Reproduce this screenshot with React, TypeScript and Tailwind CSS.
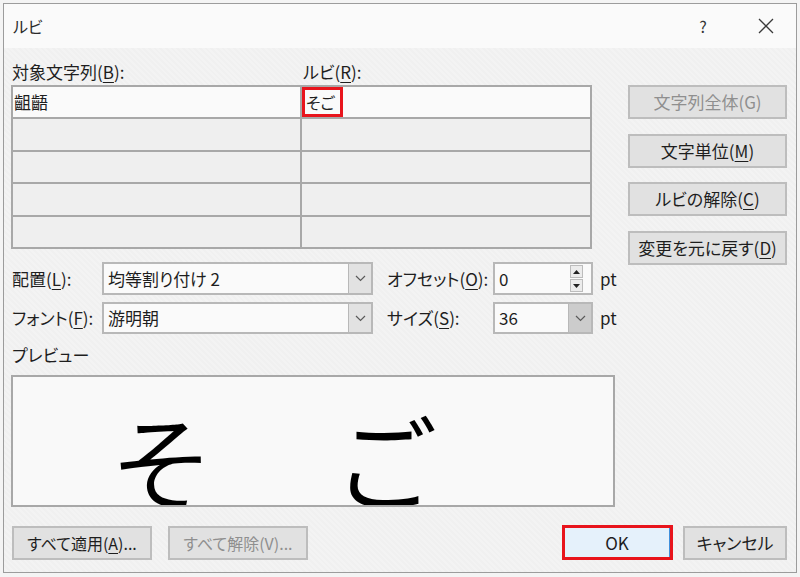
import React from "react";

const font = "font-['Noto_Sans_CJK_JP','Noto_Sans',sans-serif] [font-feature-settings:'palt']";

function U({ children }: { children: React.ReactNode }) {
  return <span className="underline underline-offset-[3px] decoration-1">{children}</span>;
}

function Chevron() {
  return (
    <svg width="11" height="7" viewBox="0 0 11 7" fill="none">
      <polyline points="1,1 5.5,5.5 10,1" stroke="#5a5a5a" strokeWidth="1.2" />
    </svg>
  );
}

function Btn({
  children,
  disabled,
  className = "",
}: {
  children: React.ReactNode;
  disabled?: boolean;
  className?: string;
}) {
  return (
    <div
      className={`h-[34px] shrink-0 flex items-center justify-center bg-[#e1e1e1] border-2 border-[#bdbdbd] ${
        disabled ? "text-[#8f8f8f]" : "text-[#1e1e1e]"
      } ${className}`}
    >
      {children}
    </div>
  );
}

function Combo({
  text,
  width,
  dark,
}: {
  text: string;
  width: string;
  dark?: boolean;
}) {
  return (
    <div className={`${width} h-full flex bg-[#fafafa] border-2 border-[#b8b8b8]`}>
      <div className="flex-1 flex items-center pl-[4px] text-[#1e1e1e]">{text}</div>
      <div
        className={`w-[23px] flex items-center justify-center border-l border-[#b8b8b8] ${
          dark ? "bg-[#cccccc]" : "bg-[#e2e2e2]"
        }`}
      >
        <Chevron />
      </div>
    </div>
  );
}

export default function App() {
  const cells = [0, 1, 2, 3, 4];
  return (
    <div className={`w-[800px] h-[577px] bg-[#f4f4f4] overflow-hidden ${font}`}>
      <div className="ml-[3px] mt-[3px] w-[794px] h-[570px] border border-[#9c9c9c] bg-[#f0f0f0] flex flex-col">
        {/* title bar */}
        <div className="h-[44px] bg-[#fafafa] flex items-center shrink-0">
          <div className="pl-[9px] text-[16px] text-[#2a2a2a]">ルビ</div>
          <div className="ml-auto w-[22px] text-center text-[16px] text-[#333] mr-[43px]">?</div>
          <div className="w-[18px] h-[18px] mr-[21px] flex items-center justify-center">
            <svg width="16" height="16" viewBox="0 0 16 16">
              <path d="M1 1 L15 15 M15 1 L1 15" stroke="#3a3a3a" strokeWidth="1.3" />
            </svg>
          </div>
        </div>

        {/* body */}
        <div className="flex-1 pl-[7px] pt-[10px] bg-[repeating-linear-gradient(45deg,#f0f0f0_0px,#f0f0f0_2px,#f3f3f3_2px,#f3f3f3_4px)] text-[#1e1e1e] text-[17px] leading-[22px]">
          <div className="flex items-start h-[191px]">
            <div className="w-[581px]">
              <div className="h-[27px] flex items-center">
                <div className="w-[292px] pl-[1px]">
                  対象文字列(<U>B</U>):
                </div>
                <div>
                  ルビ(<U>R</U>):
                </div>
              </div>
              <div className="h-[164px] border-2 border-[#a8a8a8] flex flex-col">
                {cells.map((i) => (
                  <div
                    key={i}
                    className={`flex-1 flex ${i > 0 ? "border-t-2 border-[#a8a8a8]" : ""} ${
                      i === 0 ? "bg-[#fafafa]" : "bg-[#efefef]"
                    }`}
                  >
                    <div className="w-[289px] border-r-2 border-[#a8a8a8] flex items-center pl-[1px]">
                      {i === 0 ? "齟齬" : ""}
                    </div>
                    <div className="flex-1 flex items-center">
                      {i === 0 ? (
                        <div className="h-full w-[41px] border-[3px] border-[#e8141c] flex items-center pl-[1px] text-[16px]">
                          そご
                        </div>
                      ) : null}
                    </div>
                  </div>
                ))}
              </div>
            </div>
            <div className="ml-[36px] mt-[27px] w-[159px] flex flex-col gap-[14.5px]">
              <Btn disabled>文字列全体(G)</Btn>
              <Btn>
                文字単位(<U>M</U>)
              </Btn>
              <Btn>
                ルビの解除(<U>C</U>)
              </Btn>
              <Btn>
                変更を元に戻す(<U>D</U>)
              </Btn>
            </div>
          </div>

          {/* combo rows */}
          <div className="mt-[13px] h-[33px] flex items-center">
            <div className="w-[91px] pl-[1px]">
              配置(<U>L</U>):
            </div>
            <Combo text="均等割り付け 2" width="w-[271px]" />
            <div className="w-[106px] ml-[14px]">
              オフセット(<U>O</U>):
            </div>
            <div className="w-[100px] h-full flex bg-[#fafafa] border-2 border-[#b8b8b8]">
              <div className="flex-1 flex items-center pl-[4px]">0</div>
              <div className="w-[13px] mr-[8px] flex flex-col justify-center gap-[1px] py-[1px]">
                <div className="flex-1 bg-[#ececec] border border-[#bcbcbc] flex items-center justify-center">
                  <svg width="7" height="4" viewBox="0 0 7 4">
                    <polygon points="0,4 3.5,0 7,4" fill="#222" />
                  </svg>
                </div>
                <div className="flex-1 bg-[#ececec] border border-[#bcbcbc] flex items-center justify-center">
                  <svg width="7" height="4" viewBox="0 0 7 4">
                    <polygon points="0,0 3.5,4 7,0" fill="#222" />
                  </svg>
                </div>
              </div>
            </div>
            <div className="ml-[7px]">pt</div>
          </div>
          <div className="mt-[7px] h-[32px] flex items-center">
            <div className="w-[91px] pl-[1px]">
              フォント(<U>F</U>):
            </div>
            <Combo text="游明朝" width="w-[271px]" />
            <div className="w-[106px] ml-[14px]">
              サイズ(<U>S</U>):
            </div>
            <Combo text="36" width="w-[100px]" dark />
            <div className="ml-[7px]">pt</div>
          </div>

          {/* preview */}
          <div className="mt-[8px] h-[26px] flex items-center pl-[1px]">プレビュー</div>
          <div className="mt-[7px] w-[604px] h-[132px] border-2 border-[#a8a8a8] bg-[#f9f9f9] overflow-hidden">
            <div className="flex pl-[100px] pt-[30px] text-[104px] leading-none text-black font-[350]">
              <span>そ</span>
              <span className="ml-[132px]">ご</span>
            </div>
          </div>

          {/* bottom buttons */}
          <div className="mt-[18px] flex items-center text-[16px]">
            <Btn className="ml-[1px] w-[140px]">
              すべて適用(<U>A</U>)...
            </Btn>
            <Btn disabled className="ml-[16px] w-[140px]">
              すべて解除(V)...
            </Btn>
            <div className="ml-[254px] w-[111px] h-[35px] border-[3px] border-[#e8141c] bg-[#e5f1fb] flex">
              <div className="flex-1 flex items-center justify-center border-r-[1.5px] border-[#3f8fdc] text-[17px]">
                OK
              </div>
            </div>
            <Btn className="ml-[10px] w-[104px] text-[17px]">キャンセル</Btn>
          </div>
        </div>
      </div>
    </div>
  );
}
